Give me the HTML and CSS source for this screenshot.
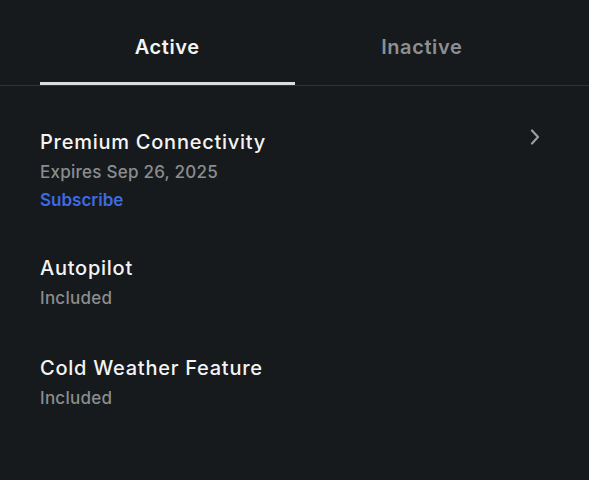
FILE: index.html
```html
<!DOCTYPE html>
<html lang="en">
<head>
    <meta charset="UTF-8">
    <meta name="viewport" content="width=device-width, initial-scale=1.0">
    <title>Upgrades</title>
    <link rel="stylesheet" href="styles.css">
</head>
<body>
    <div class="tabs">
        <div class="tab active">Active</div>
        <div class="tab">Inactive</div>
    </div>

    <div class="list">
        <div class="item">
            <div class="item-body">
                <div class="item-title">Premium Connectivity</div>
                <div class="item-sub">Expires Sep 26, 2025</div>
                <a href="#" class="item-link">Subscribe</a>
            </div>
            <svg class="chevron" width="12" height="16" viewBox="0 0 12 16">
                <path d="M3 1.5 L9 8 L3 14.5" fill="none" stroke="#9b9d9f" stroke-width="2.2" stroke-linecap="round" stroke-linejoin="round"/>
            </svg>
        </div>
        <div class="item">
            <div class="item-body">
                <div class="item-title">Autopilot</div>
                <div class="item-sub">Included</div>
            </div>
        </div>
        <div class="item">
            <div class="item-body">
                <div class="item-title">Cold Weather Feature</div>
                <div class="item-sub">Included</div>
            </div>
        </div>
    </div>
</body>
</html>
```

FILE: styles.css
```css
body {
    margin: 0;
    background: #161a1c;
    font-family: Inter, "Noto Sans", sans-serif;
    color: #f2f2f2;
    height: 480px;
    overflow: hidden;
}
.tabs {
    display: flex;
    padding: 0 40px;
    border-bottom: 1px solid #2f3335;
}
.tab {
    flex: 1;
    text-align: center;
    font-size: 20px;
    font-weight: 600;
    line-height: 24px;
    letter-spacing: 0.6px;
    padding: 35px 0 23px;
    color: #8d8f91;
    border-bottom: 3px solid transparent;
}
.tab.active {
    color: #f4f4f4;
    border-bottom-color: #dcdcdc;
}
.list {
    padding-top: 21px;
}
.item {
    display: flex;
    padding: 20px 48px 20px 40px;
}
.item-body {
    flex: 1;
}
.item-title {
    font-size: 20px;
    font-weight: 500;
    line-height: 30px;
    letter-spacing: 0.75px;
    color: #f4f4f4;
}
.item-sub {
    font-size: 17px;
    font-weight: 500;
    line-height: 30px;
    letter-spacing: 0.25px;
    color: #8b8d8f;
}
.item-link {
    display: block;
    font-size: 17px;
    font-weight: 600;
    line-height: 26px;
    color: #3e6ae1;
    text-decoration: none;
}
.chevron {
    margin-top: 2px;
}
```
